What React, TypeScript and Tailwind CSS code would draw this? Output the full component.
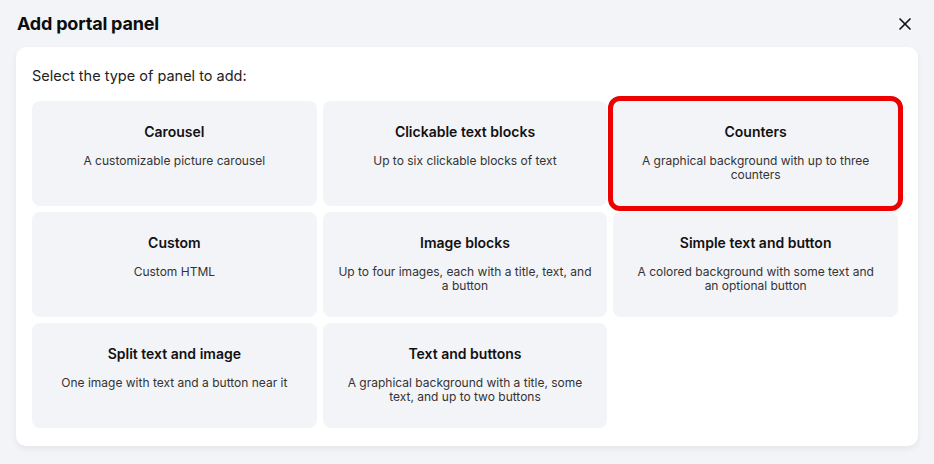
import { X } from "lucide-react"

const panels = [
  { title: "Carousel", lines: ["A customizable picture carousel"] },
  { title: "Clickable text blocks", lines: ["Up to six clickable blocks of text"] },
  { title: "Counters", lines: ["A graphical background with up to three", "counters"], selected: true },
  { title: "Custom", lines: ["Custom HTML"] },
  { title: "Image blocks", lines: ["Up to four images, each with a title, text, and", "a button"] },
  { title: "Simple text and button", lines: ["A colored background with some text and", "an optional button"] },
  { title: "Split text and image", lines: ["One image with text and a button near it"] },
  { title: "Text and buttons", lines: ["A graphical background with a title, some", "text, and up to two buttons"] },
]

export default function App() {
  return (
    <div
      className="h-[464px] w-[934px] bg-[#f3f4f8] text-[#111]"
      style={{ fontFamily: "Inter, 'Noto Sans', sans-serif" }}
    >
      <div className="flex h-[47px] items-center justify-between pr-[19px] pl-[17px]">
        <div className="text-[18px] font-bold tracking-[-0.2px] text-[#0d0d0d]">Add portal panel</div>
        <X size={20} strokeWidth={2} className="text-[#111]" />
      </div>
      <div className="mx-[16px] rounded-[10px] bg-white pt-[20px] pr-[20px] pb-[18px] pl-[16px] shadow-[0_3px_6px_rgba(0,0,0,0.06)]">
        <div className="text-[14.5px] leading-[18px] text-[#222]">Select the type of panel to add:</div>
        <div className="mt-[16px] grid grid-cols-3 gap-[6px]">
          {panels.map((p) => (
            <div key={p.title} className="relative flex h-[105px] flex-col items-center rounded-[8px] bg-[#f3f4f8] px-[10px] pt-[22px] text-center">
              {p.selected && (
                <div className="absolute -inset-[5px] rounded-[12px] border-[5px] border-[#ee0000]" />
              )}
              <div className="text-[14px] leading-[18px] font-semibold text-[#111]">{p.title}</div>
              <div className="mt-[13px] text-[12px] leading-[14px] whitespace-nowrap text-[#333]">
                {p.lines.map((l) => (
                  <div key={l}>{l}</div>
                ))}
              </div>
            </div>
          ))}
        </div>
      </div>
    </div>
  )
}
